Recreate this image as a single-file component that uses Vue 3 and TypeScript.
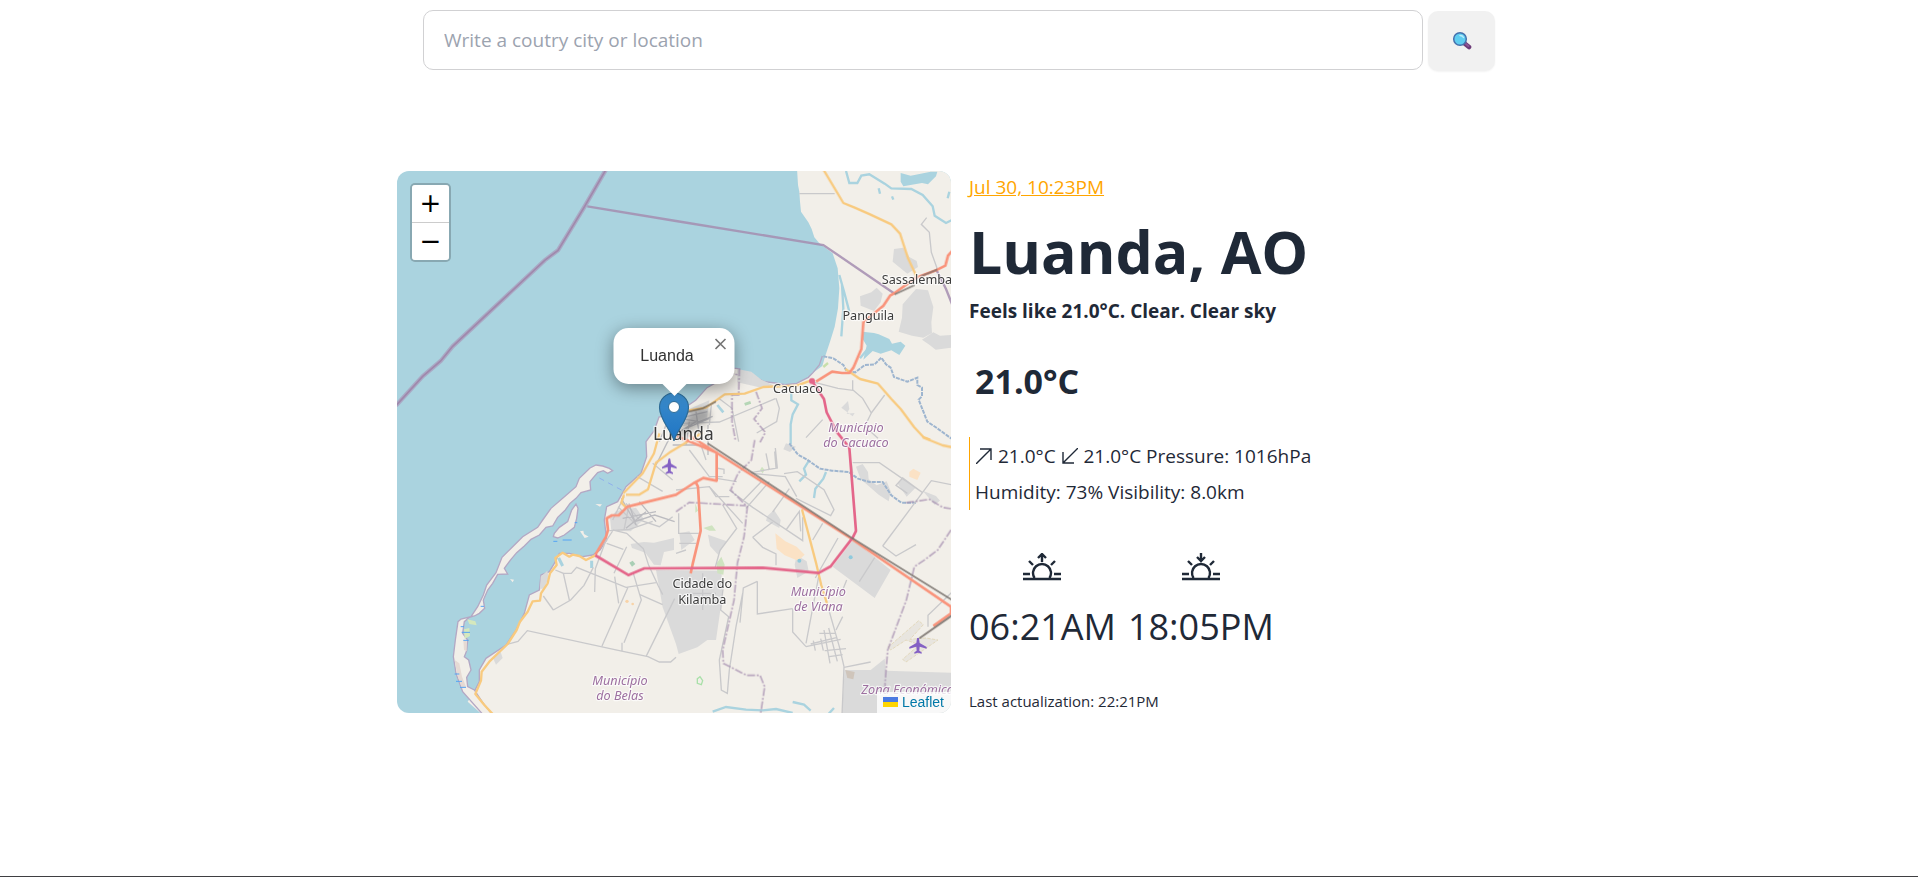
<script setup lang="ts">
import { ref } from 'vue'

interface Label {
  x: number
  y: number
  text: string
  kind: 'city' | 'town' | 'area'
}

const query = ref('')
const popupOpen = ref(true)

const westCoast =
  '1025 611 999 608 969 648 933 668 899 706 849 740 789 756 775 796 750 830 752 875 735 925 690 965 665 1010 632 1025 625 1065 632 1125 612 1155 590 1170 560 1175 520 1165 490 1165 475 1195 460 1220 435 1230 430 1275 400 1290 385 1345 360 1395 330 1440 270 1480 250 1515 250 1550 235 1580'

const spit =
  'M582 909L600 900 620 903 640 910 650 917 635 925 622 917 605 923 590 940 582 950 584 975 555 983 540 1000 522 1015 508 1035 485 1057 470 1083 450 1087 430 1110 405 1123 385 1143 362 1163 345 1183 325 1210 335 1227 305 1228 290 1255 275 1275 262 1305 266 1330 250 1345 235 1353 220 1357 205 1370 200 1405 215 1425 212 1457 205 1475 218 1485 225 1515 212 1537 215 1565 235 1575 262 1615 290 1650 262 1650 200 1580 180 1525 172 1475 178 1425 186 1370 195 1362 225 1355 245 1325 262 1290 272 1260 300 1223 318 1177 350 1145 380 1115 425 1087 440 1065 465 1030 500 1000 540 965 550 940z'

const labels: Label[] = [
  { x: 862, y: 825, text: 'Luanda', kind: 'city' },
  { x: 1563, y: 357, text: 'Sassalemba', kind: 'town' },
  { x: 1417, y: 465, text: 'Panguila', kind: 'town' },
  { x: 1206, y: 683, text: 'Cacuaco', kind: 'town' },
  { x: 919, y: 1270, text: 'Cidade do', kind: 'town' },
  { x: 919, y: 1317, text: 'Kilamba', kind: 'town' },
  { x: 1380, y: 801, text: 'Município', kind: 'area' },
  { x: 1380, y: 846, text: 'do Cacuaco', kind: 'area' },
  { x: 1267, y: 1293, text: 'Município', kind: 'area' },
  { x: 1267, y: 1338, text: 'de Viana', kind: 'area' },
  { x: 672, y: 1561, text: 'Município', kind: 'area' },
  { x: 672, y: 1606, text: 'do Belas', kind: 'area' },
  { x: 1535, y: 1586, text: 'Zona Económica', kind: 'area' },
]
</script>

<template>
  <div class="page">
    <form class="search" @submit.prevent>
      <input v-model="query" type="text" aria-label="Location" placeholder="Write a coutry city or location" />
      <button type="submit" aria-label="Search">
        <svg viewBox="0 0 20 20" width="20" height="20" aria-hidden="true">
          <path d="M12 12l5 4" stroke="#6d3b78" stroke-width="4.6" stroke-linecap="round" />
          <path d="M14 13l2.500 2" stroke="#8d5796" stroke-width="2" stroke-linecap="round" />
          <circle cx="8" cy="8" r="6.300" fill="#5fcdf0" stroke="#4571ad" stroke-width="1.500" />
          <path d="M8 4.500q2.500 0 3.500 2" stroke="#b9ecfb" stroke-width="1.500" fill="none" stroke-linecap="round" />
        </svg>
      </button>
    </form>

    <main class="weather">
      <section class="map" aria-label="Map">
        <svg class="tiles" viewBox="3 18 1662 1626" preserveAspectRatio="xMidYMid slice">
          <rect x="-500" y="-500" width="2700" height="2700" fill="#aad3df" />
          <!-- mainland -->
          <path
            class="land"
            :d="`M1203 10L1206 60 1210 80 1212 110 1215 140 1237 172 1247 192 1255 217 1270 235 1310 265 1325 310 1330 370 1326 430 1316 485 1302 530 1287 575 1279 603 1251 623 1237 637 1202 655 1167 659 1137 654 1105 650 1085 641 1063 624 1047 625 ${westCoast} 215 1610 260 1650 1700 1650V10z`"
          />
          <path :d="`M1279 573L1270 600 1251 623 1237 637 1202 655 1167 659 1137 654 1105 650 1085 641 1063 624 1047 625 ${westCoast}`" class="shore" />
          <path :d="spit" class="land shore-land" />
          <g transform="translate(0 825)">
            <path class="land shore-land" d="M472 290L475 280 490 262 515 245 527 210 540 192 546 205 542 235 535 262 505 285 485 294z" />
            <path class="land" d="M552 274l10-2 2 10 14 8-12 4zM598 192l20 1-6 7zM342 417l12 2-4 8z" />
            <path d="M176 660l14 10 8 40 12 30-12 6-14-40z" fill="#e6dad4" />
            <path d="M202 600l10 4 0 30-8-4z" fill="#e6dad4" />
            <path d="M214 538l24 6 4 12-22-4zM204 568l16-4 2 24-16 8z" fill="#d5e8bd" />
            <path d="M197 577h25M202 601h16M194 560h10M192 742h18M180 724h18M176 702h14M472 304h12M500 300h27M254 499h10M536 248h8" stroke="#54a4f5" stroke-width="3" />
            <path d="M610 114l70 38" stroke="#8fb0ed" stroke-width="3" stroke-dasharray="16 14" />
            <path class="shade" d="M434 410l20-18 4 20-14 34h-12zM642 235l18-22 60-10 24 35-40 36-58-2zM704 312l40-6 30 2 60-14v36l-30 6-10 40-20-2-26-36-40-14zM290 652l24-16 6 18-20 20z" />
            <path d="M488 354l12 24M587 362v22" stroke="#aad3df" stroke-width="9" />
            <path d="M700 368l10-6 8 10-10 8z" fill="#a9cfb5" />
            <circle cx="693" cy="484" r="5" fill="#f8d3a8" /><circle cx="710" cy="492" r="4" fill="#f8d3a8" />
          </g>

          <!-- built-up areas and lakes -->
          <g transform="translate(840 0)">
            <path class="shade" d="M654 252l28-4 18 28 22 12 4 18-32 20-44-36zM552 394l34-12 16-14 18 18-6 26-20 26-40-16zM668 500l10-42 2-40 40-46 36 4 16 50-6 46 2 32-26 14-34-6zM738 524l34-22 20 10 33-2v38l-46 6-18-14zM184 612l42 8 30 24 40 18-40 6-72-16zM496 728l20-20 4 24-8 14 24-2-6 10zM20 740l80-34-8 60-80 20z" />
            <path class="lake" d="M560 500l34 4 14 4 32 14 8 14 26-6 14 12-18 28-24-14-32 10-24-8-28 26 10-42-12-20zM674 24l30 8 60-12h20l-4 14-24 24-18-4-56 10-8-14z" />
            <path class="creek" d="M510 18l10 36 24 0 12-22 24-4 46 28 20 14 60 2 34 18 30 34 6 28 34 22 20-10 18 0M608 70l4 16M648 94l4 10M490 330l14 50 16 60M498 360l4 70-6 84M552 580l20-24M346 684l0 22 20 12-16 30-6 30 0 60M820 80l-5 20" />
            <path d="M442 574l30 6 30 20 10 18 26 4 28-22 30-2 20-20 14 20 14 10 10 28 40 14 30-12 0 22 14 8 0 26-10 10 26 66 30 20 30 22 20 14" class="river" />
            <path d="M442 606l14-12" stroke="#c8dfab" stroke-width="7" /><path d="M206 718l18-6" stroke="#b5d6b5" stroke-width="9" />
            <path d="M124 720l18 22" stroke="#aad3df" stroke-width="8" />
          </g>
          <g transform="translate(840 825)">
            <path class="shade" d="M-60 390l196 2 4 70-20 138h-26l-30 22-56 20-8-30-40-110zM532 300l112 90-48 84-126-94zM506 690h78l42-34 4 36 195 6v146H496zM540 80l20-8 16 24 2 22 24 18 30-12 12 30-6 30-30-20-30-26-24-20zM274 228l20-18 20 30-4 24-40-22zM96 284l56 20-26 40-24-26zM362 346l30 18 6 30-34 20-8-40zM740 152l40 16 12 14-16 12zM330 10l30 10-18 16-20-8zM664 130l14-14 40 28-26 26zM10 280l30-6 16 26-40 30z" />
            <path d="M636 622l92-80 14 12-40 44 48-4 36 6-96 66-10-8 50-44-40-14-46 30z" fill="#e8e5df" stroke="#e3d9bd" stroke-width="3" stroke-dasharray="10 4" />
            <path d="M298 280l30 24 34 16 24 24-20 18-40-16-24-20zM700 96l12-10 22 12-10 22-24-10z" fill="#fbe2c5" />
            <path d="M82 264l26-8 12 16-20 0zM252 90l6-10 8 10-6 10zM122 370l14-20 10 24-4 30-18-4zM58 190l8 22-8 6z" fill="#cfe3c0" />
            <path d="M64 716l8-6 8 12-4 12-12-4z" fill="none" stroke="#a9e0a9" stroke-width="4" />
            <path class="creek" d="M400 60l-16 26 6 18-20 20M450 96l-8 20-24 30-4 28M110 815l40-14 60 8 50 2 40-4 50 12M350 786l34 8 20 18M450 830l24-26" />
            <path class="river" d="M340 10l26 34 26 14 40 28 36 6 50 4 28 20 34 10 40 0 26 40 30 22 44 0" />
            <circle cx="524" cy="352" r="6" fill="#8fcadd" /><circle cx="370" cy="362" r="6" fill="#8fcadd" />
            <path d="M508 690l28 6-4 22-18-4z" fill="#cfc5bb" />
          </g>

          <!-- minor streets -->
          <g class="street">
            <path transform="translate(840 0)" d="M370 86h106M752 158l-16 20 24 24 6 60 18 50M416 652l70 18 44 6 0-30M530 674l30 26 26 44 40-54M0 776l130-5 168-70M100 780l6-60M128 700l40 30 20 100M300 700l10 30-8 40-60 34M440 764l-50 54M586 744l-20 40 40 36" />
            <path transform="translate(0 825)" d="M330 614l36-10 28-32 276 60 86 18 34 16h34l16-14M472 510l52-30 40-44 28-54M472 510l-30-42M520 480l-18-80-24-10M502 400l24 0 16-18 148 60 90-14M618 618l78-176M654 400l38-80M656 410l12 80M596 456l2-70 30-80 24-36 40 10 50 46 16 50 28 60 14 28M732 464l68 30M684 608l52-128-24-80M678 608v24M750 650l86-174M632 310l50 18M650 240l34-70M640 272l60-4 70-24M690 190l40 50 60 20 40-30M666 200l60 60M700 190l-16 80M724 110l76 44M770 70l60 50" />
            <path transform="translate(840 825)" d="M140 195l42 70-50 66-14 50M182 125l-60-10M160 150l70 52 150 100 0-70M230 292l60-46M230 292l30 30 40 20v34M224 98l80-14-6-60M228 100l100 10 34 60M360 175l104 52 10-18-30-60-80-54-40 6M330 270l40-56 4 60M440 250l-30 50M486 294l-68 120M550 425l46-72M620 318l146-196 60 12M620 318l40 30 60-34M244 424v98l106-16M244 424l-42 20-10 104M144 420l-10 90 24 20-28 130 6 90 18 10 6-70 20-130 20-100M350 506v70l40 44M428 410l-38 200M450 480l40 140 14 60M390 620l104-22M412 602l6 30M434 596l8 36M444 570l18 100M458 564l26 100M404 612l80-20M430 580h50M446 632l64-6M460 650l40-6M500 530l-20 40M504 680l-6 145M504 682l80-16M512 420l-20 50M756 560v-34l50-48 20-20M8 220v60l60 0M10 310h50M0 340l30-10M530 100l-4-30M40 30l60 80 40 0M70 0l20 60M120 84l24 4v14M270 40l10 50M296 34l4 50M0 150l100-10 100 110M280 125l-70 80M256 125l-54 56M340 146l-50 70M100 140l20 30 40 0" />
            <path transform="translate(840 825)" d="M530 68h80l130 90-60-44-20 22 34 24M80 400v110M20 430h80M30 460h90" />
          </g>

          <!-- dense street grid around the centre -->
          <path
            d="M790 830l24-60 60-16 60-14M780 900l40-80 80-50M850 760l60 10 40-16M870 790l70-30M900 740l10 70M830 840l80 0M936 780v90M880 770l-10 70M676 1000l40 70 60-20 60 20M700 1020l20 60M730 1010l50 60M680 1060l100-20M690 1090l60-50"
            fill="none" stroke="#bcbcc0" stroke-width="4"
          />

          <!-- dashed municipal borders -->
          <g fill="none" stroke="#a68fb0" stroke-width="5" stroke-dasharray="24 5 6 5" opacity=".75">
            <path transform="translate(840 825)" d="M236 0l-10 60-40 40-22 50 50 50-10 90-20 80-10 110-34 150 2 40 70 36 40 0 14 34-12 80M825 270l-40 60-40 30-30 20-24 100-56 150-8 100 4 70M690 188l70-10 40 24 25 4M0 215l40-28 170 10" />
            <path transform="translate(840 0)" d="M190 610l-2 80-20 0 0 80 10 55M240 680l18 50-24 32 34 40-16 30M150 620l36 10" />
          </g>

          <!-- sea borders -->
          <path d="M632 10l-66 114-80 132-40 30-276 258-36 44-54 46L0 722" fill="none" stroke="#a993b7" stroke-width="13" opacity=".65" />
          <path d="M632 10l-66 114-80 132-40 30-276 258-36 44-54 46L0 722" fill="none" stroke="#a088ac" stroke-width="5" />
          <path d="M574 124l266 44 442 72 214 146M1620 312l30 60 20 50" fill="none" stroke="#a58db0" stroke-width="7" opacity=".85" />

          <!-- roads -->
          <g class="road">
            <g class="secondary">
              <path transform="translate(840 0)" d="M440 10l62 104 34 14 46 20 64 30 26 28 24 74 28 60M30 738l60-10 56-40 60-2 56-20 100-4 50-18M508 612l44 30 54 14 40 46 28 30 40 54 28 30 20 8" />
              <path transform="translate(0 825)" d="M790-20L774 40 740 100 682 160M690 164h40l26-16 24-80 40-30 100-60M684 164l-8 24 14 14M1218 208l42 160 16 68 22 70M1580-8l60 24 30 6" />
              <path transform="translate(0 825)" d="M290 822L265 795 238 762 255 722 257 695 280 665 335 612 362 570 372 545 395 515 402 500 410 484 432 482 435 460 455 430 462 400 482 375 478 354 500 338 520 350 530 344 550 348 570 360 598 346" />
            </g>
            <path class="primary" transform="translate(840 0)" d="M830 256l-14 16-8 30-24 12-64 24-64 46-14 8-20 30-60 50-6 80-24 56-12 16-22 0-30-4-48 30" />
            <g class="primary" transform="translate(0 825)">
              <path d="M598 344L630 290 636 270 632 235 648 226 668 226 694 200 840 164 892 130 922 114 962 122V38L842-12M900 128L906 140 914 272 890 372 884 400M880-14L1360 292 1665 500V520L1612 558" />
            </g>
            <path class="trunk" d="M1248 648L1284 702 1292 742 1322 800 1360 848 1380 1098 1370 1118 1304 1204 1268 1224 1100 1208 745 1210 697 1230 598 1171" />
            <circle cx="1248" cy="648" r="9" fill="#e4668a" />
          </g>
          <g fill="none" stroke="#77706b" opacity=".85">
            <path d="M935 835L1360 1114 1670 1306" stroke-width="5" />
            <path d="M1670 1350l-100 70" stroke-width="6" />
            <path d="M1496 388l60-28M1574 334l50-20M870 742l50-12 40-20" stroke-width="5" />
          </g>

          <!-- airfields -->
          <g fill="#8461c4">
            <path d="M817 882q4-4 6 0l2 14 17 10v5l-17-5-1 12 7 5v4l-11-3-11 3v-4l7-5-1-12-17 5v-5l17-10z" />
            <path transform="translate(746 538)" d="M817 882q4-4 6 0l2 14 21 12v5l-21-6-1 12 7 5v4l-11-3-11 3v-4l7-5-1-12-21 6v-5l21-12z" />
          </g>

          <text v-for="label in labels" :key="label.text + label.y" :x="label.x" :y="label.y" :class="label.kind">{{ label.text }}</text>
        </svg>

        <div class="zoom-control">
          <button type="button" aria-label="Zoom in">+</button>
          <button type="button" aria-label="Zoom out">−</button>
        </div>

        <div class="marker">
          <div v-if="popupOpen" class="popup">
            <span>Luanda</span>
            <button type="button" aria-label="Close popup" @click="popupOpen = false">
              <svg viewBox="0 0 12 12" width="12" height="12"><path d="M1 1l10 10M11 1L1 11" stroke="#757575" stroke-width="1.600" /></svg>
            </button>
          </div>
          <svg class="pin" viewBox="0 0 60 50" width="60" height="50" aria-hidden="true">
            <defs>
              <linearGradient id="pin-blue" x1="0" y1="0" x2="0" y2="1">
                <stop offset="0" stop-color="#3b8ccb" />
                <stop offset="1" stop-color="#1f75c4" />
              </linearGradient>
              <filter id="soft" x="-30%" y="-30%" width="160%" height="160%"><feGaussianBlur stdDeviation="3" /></filter>
            </defs>
            <path d="M16 48L32 20q12-8 20 0 2 8-10 14z" fill="#000" opacity=".25" filter="url(#soft)" />
            <path d="M15.500 49C14 40 1 28 1 15.500 1 7 7.500 1 15.500 1S30 7 30 15.500C30 28 17 40 15.500 49z" fill="url(#pin-blue)" stroke="#2e6c97" stroke-width="1.200" />
            <circle cx="15.500" cy="15" r="5.500" fill="#fff" stroke="#2e6c97" />
          </svg>
        </div>

        <div class="attribution">
          <a href="#leaflet">
            <svg viewBox="0 0 15 10" width="15" height="10" aria-hidden="true"><path d="M0 0h15v5H0z" fill="#4c7be1" /><path d="M0 5h15v5H0z" fill="#ffd500" /></svg>
            Leaflet
          </a>
        </div>
      </section>

      <section class="details">
        <p class="date">Jul 30, 10:23PM</p>
        <h1>Luanda, AO</h1>
        <p class="feels">Feels like 21.0°C. Clear. Clear sky</p>
        <p class="temperature">21.0°C</p>
        <div class="metrics">
          <p>
            <svg viewBox="0 0 16 16" width="16" height="16" aria-label="High"><path d="M0 16L15 1M4 1h11v11" /></svg>
            21.0°C
            <svg viewBox="0 0 16 16" width="16" height="16" aria-label="Low"><path d="M16 0L1 15M1 4v11h11" /></svg>
            21.0°C Pressure: 1016hPa
          </p>
          <p>Humidity: 73% Visibility: 8.0km</p>
        </div>
        <div class="sun">
          <div>
            <svg viewBox="0 0 38 28" width="38" height="28" aria-label="Sunrise">
              <path d="M0 26h38M0 21h7M31 21h7M11.500 25a9 9 0 1 1 15 0M6 8l4 4M32 8l-4 4M19 9V2M15 5l4-4 4 4" />
            </svg>
            <p>06:21AM</p>
          </div>
          <div>
            <svg viewBox="0 0 38 28" width="38" height="28" aria-label="Sunset">
              <path d="M0 26h38M0 21h7M31 21h7M11.500 25a9 9 0 1 1 15 0M6 8l4 4M32 8l-4 4M19 0v8M15 4l4 4 4-4" />
            </svg>
            <p>18:05PM</p>
          </div>
        </div>
        <p class="updated">Last actualization: 22:21PM</p>
      </section>
    </main>
  </div>
</template>

<style>
body {
  margin: 0;
  background: #fff;
}
</style>

<style scoped>
.page {
  box-sizing: border-box;
  min-height: 100vh;
  padding: 10px 16px 0;
  border-bottom: 1px solid #3f3f42;
  color: #1f2937;
  font-family: 'Segoe UI', 'Open Sans', 'Noto Sans', sans-serif;
}
p,
h1 {
  margin: 0;
}
button {
  padding: 0;
  border: 0;
  cursor: pointer;
}
.search {
  display: flex;
  justify-content: center;
  gap: 5px;
}
.search input {
  box-sizing: border-box;
  flex: 0 1 1000px;
  min-width: 0;
  height: 60px;
  padding: 0 20px;
  border: 1px solid #d1d1d3;
  border-radius: 10px;
  font: inherit;
  font-size: 19px;
  color: inherit;
}
.search input::placeholder {
  color: #9ca3af;
  opacity: 1;
}
.search button {
  display: grid;
  place-items: center;
  flex: none;
  width: 67px;
  height: 60px;
  margin-top: 1px;
  border-radius: 10px;
  background: #f1f1f1;
  box-shadow: 0 1px 2px #0000000d;
}
.weather {
  display: grid;
  grid-template-columns: minmax(0, 554px) minmax(0, 554px);
  justify-content: center;
  gap: 16px;
  margin-top: 100px;
}
.map {
  position: relative;
  min-height: 542px;
  overflow: hidden;
  border-radius: 12px;
  font-family: 'Liberation Sans', Arial, sans-serif;
}
.tiles {
  position: absolute;
  inset: 0;
  width: 100%;
  height: 100%;
}
.land {
  fill: #f2efe9;
}
.shore {
  fill: none;
}
.shore,
.shore-land {
  stroke: #b3a8c4;
  stroke-width: 4;
}
.shade {
  fill: #dadada;
}
.lake {
  fill: #aad3df;
}
.creek {
  fill: none;
  stroke: #aad3df;
  stroke-width: 7;
}
.river {
  fill: none;
  stroke: #9eb5cf;
  stroke-width: 6;
  stroke-dasharray: 12 3;
}
.street {
  fill: none;
  stroke: #c9c9cb;
  stroke-width: 4;
}
.road {
  fill: none;
  stroke-linejoin: round;
}
.secondary {
  stroke: #f8ca7f;
  stroke-width: 7;
}
.primary {
  stroke: #f9947c;
  stroke-width: 8;
}
.trunk {
  stroke: #e4668a;
  stroke-width: 8;
}
.tiles text {
  text-anchor: middle;
  font-family: 'Noto Sans', sans-serif;
  font-size: 38px;
  paint-order: stroke;
  stroke: #ffffffb0;
  stroke-width: 7px;
  stroke-linejoin: round;
  fill: #3c3c3c;
}
.tiles .city {
  font-size: 52px;
}
.tiles .area {
  font-style: italic;
  fill: #9d70a0;
}
.zoom-control {
  position: absolute;
  top: 12px;
  left: 13px;
  display: grid;
  gap: 1px;
  border: 2px solid #0003;
  border-radius: 5px;
  background: #ccc;
  background-clip: padding-box;
  overflow: hidden;
}
.zoom-control button {
  width: 37px;
  height: 37px;
  background: #fff;
  color: #000;
  font: 26px/37px 'DejaVu Sans', sans-serif;
}
.marker {
  position: absolute;
  top: 157px;
  left: 50%;
  display: grid;
  justify-items: center;
  transform: translateX(-50%);
}
.popup {
  position: relative;
  z-index: 1;
  display: grid;
  place-items: center;
  width: 121px;
  height: 56px;
  border-radius: 15px;
  background: #fff;
  box-shadow: 0 4px 17px #0006;
  color: #333;
  font-size: 16px;
}
.popup span {
  padding-right: 14px;
}
.popup::after {
  content: '';
  position: absolute;
  top: 100%;
  left: 50%;
  border: 12px solid transparent;
  border-top-color: #fff;
  border-bottom: 0;
  transform: translateX(-50%);
}
.popup button {
  position: absolute;
  top: 10px;
  right: 8px;
  display: grid;
  background: none;
}
.pin {
  margin-top: 8px;
  margin-left: 29px;
}
.attribution {
  position: absolute;
  right: 0;
  bottom: 0;
  padding: 0 7px 0 6px;
  background: #fffc;
  font-size: 14px;
  line-height: 21px;
}
.attribution a {
  color: #0078a8;
  text-decoration: none;
}
.details {
  padding-left: 2px;
  font-size: 19px;
}
.date {
  color: #ffa500;
  line-height: 32px;
  text-decoration: underline;
}
h1 {
  margin-top: 16px;
  font-size: 59px;
  font-weight: 700;
  line-height: 64px;
}
.feels {
  margin-top: 14px;
  font-weight: 700;
  line-height: 28px;
}
.temperature {
  margin-top: 36px;
  padding-left: 6px;
  font-size: 34px;
  font-weight: 700;
  line-height: 40px;
}
.metrics {
  margin-top: 36px;
  padding: 1px 0 0 5px;
  border-left: 1px solid #ffa500;
  line-height: 36px;
}
.metrics svg {
  margin: 0 1px;
  vertical-align: -1px;
  fill: none;
  stroke: #1f2937;
  stroke-width: 1.4;
}
.sun {
  display: flex;
  gap: 12px;
  margin-top: 43px;
  font-size: 36px;
  line-height: 48px;
}
.sun > div {
  display: grid;
  gap: 22px;
  justify-items: center;
}
.sun svg {
  fill: none;
  stroke: #1f2937;
  stroke-width: 2.4;
}
.updated {
  margin-top: 38px;
  font-size: 15px;
  line-height: 24px;
}
@media (max-width: 800px) {
  .weather {
    grid-template-columns: minmax(0, 554px);
  }
}
</style>
